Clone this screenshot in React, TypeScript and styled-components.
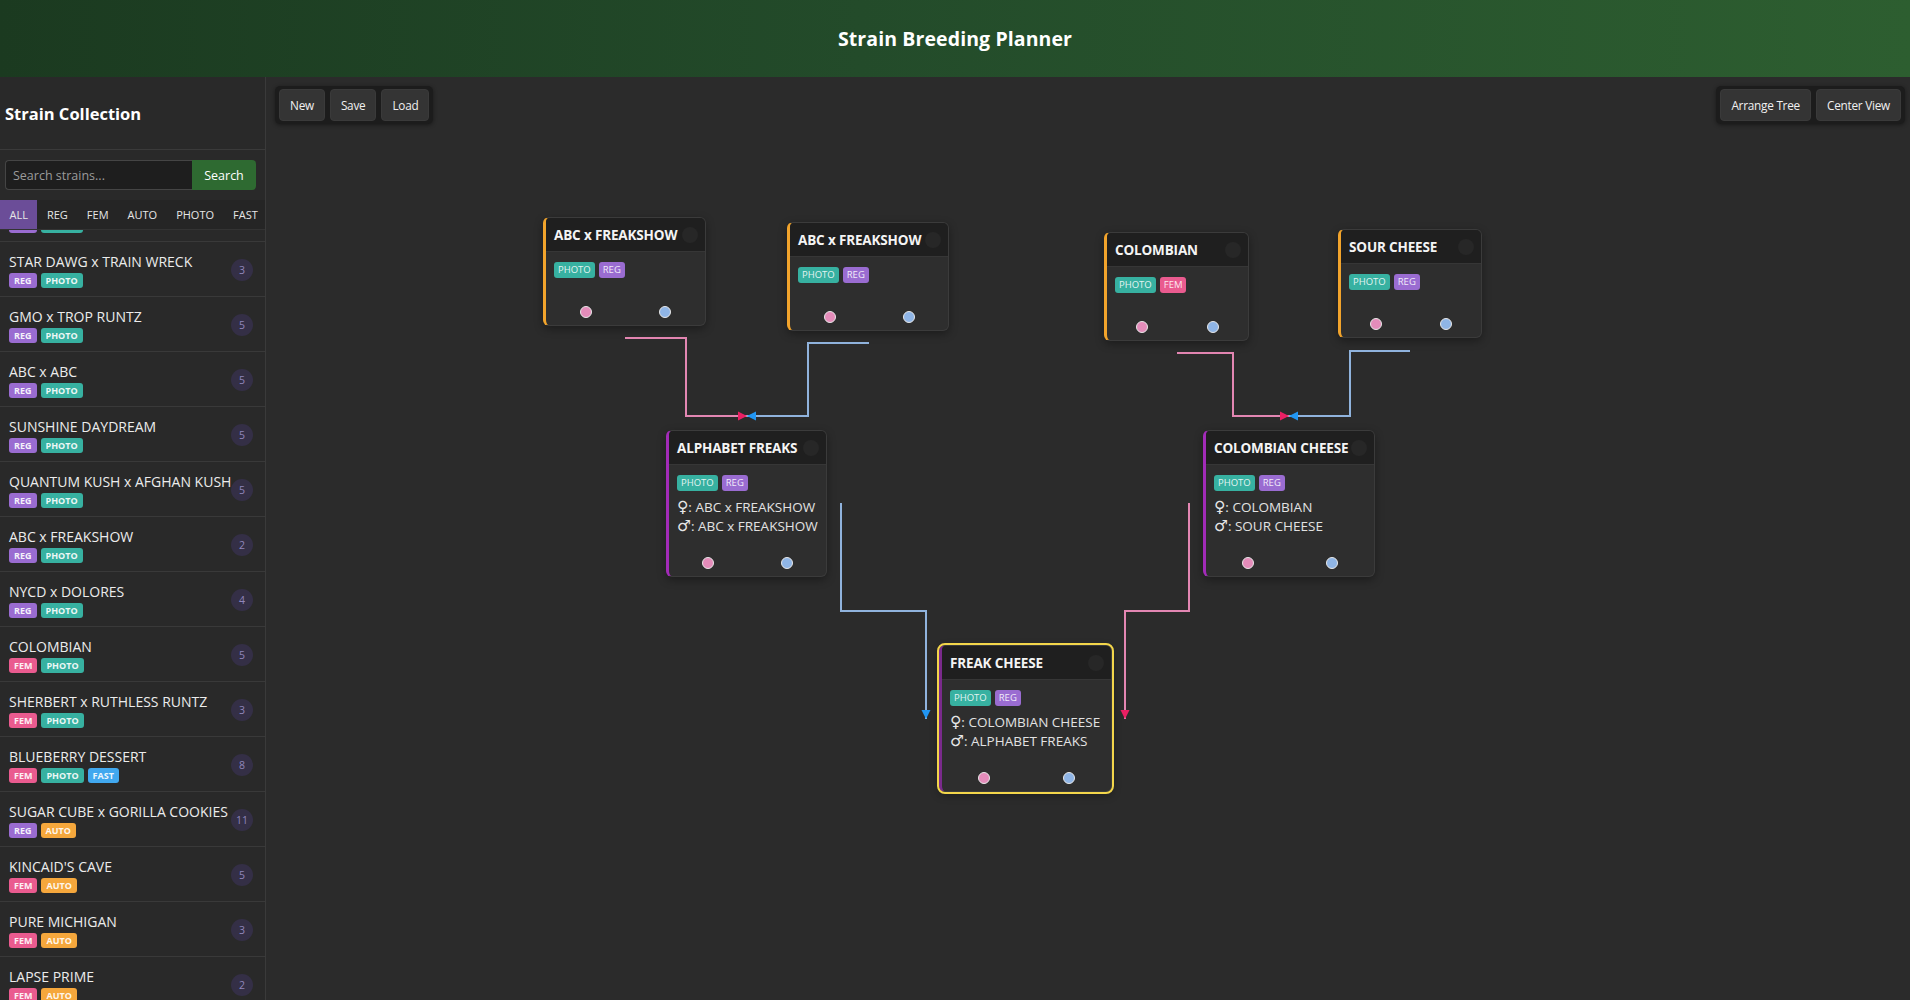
import React, { useLayoutEffect, useRef } from "react";
import styled, { createGlobalStyle } from "styled-components";

const GlobalStyle = createGlobalStyle`
  html, body { margin: 0; padding: 0; height: 100%; background: #2b2b2b; }
  body {
    font-family: "Open Sans", "Noto Sans", "Liberation Sans", Arial, sans-serif;
    color: #e8e8e8;
    overflow: hidden;
  }
  #root { height: 100%; }
  * { box-sizing: border-box; }
`;

type Tag = "REG" | "FEM" | "AUTO" | "PHOTO" | "FAST";

const tagColors: Record<Tag, string> = {
  REG: "#9a6cd1",
  FEM: "#ea5b8f",
  AUTO: "#f5a73c",
  PHOTO: "#37b1a1",
  FAST: "#41a8ef",
};

interface Strain {
  name: string;
  tags: Tag[];
  count: number;
}

const strains: Strain[] = [
  { name: "WEDDING CAKE x RUNTZ", tags: ["REG", "PHOTO"], count: 4 },
  { name: "STAR DAWG x TRAIN WRECK", tags: ["REG", "PHOTO"], count: 3 },
  { name: "GMO x TROP RUNTZ", tags: ["REG", "PHOTO"], count: 5 },
  { name: "ABC x ABC", tags: ["REG", "PHOTO"], count: 5 },
  { name: "SUNSHINE DAYDREAM", tags: ["REG", "PHOTO"], count: 5 },
  { name: "QUANTUM KUSH x AFGHAN KUSH", tags: ["REG", "PHOTO"], count: 5 },
  { name: "ABC x FREAKSHOW", tags: ["REG", "PHOTO"], count: 2 },
  { name: "NYCD x DOLORES", tags: ["REG", "PHOTO"], count: 4 },
  { name: "COLOMBIAN", tags: ["FEM", "PHOTO"], count: 5 },
  { name: "SHERBERT x RUTHLESS RUNTZ", tags: ["FEM", "PHOTO"], count: 3 },
  { name: "BLUEBERRY DESSERT", tags: ["FEM", "PHOTO", "FAST"], count: 8 },
  { name: "SUGAR CUBE x GORILLA COOKIES", tags: ["REG", "AUTO"], count: 11 },
  { name: "KINCAID'S CAVE", tags: ["FEM", "AUTO"], count: 5 },
  { name: "PURE MICHIGAN", tags: ["FEM", "AUTO"], count: 3 },
  { name: "LAPSE PRIME", tags: ["FEM", "AUTO"], count: 2 },
];

interface TreeNode {
  id: string;
  title: string;
  tags: Tag[];
  x: number;
  y: number;
  w: number;
  accent: string;
  mother?: string;
  father?: string;
  selected?: boolean;
}

const ORANGE = "#f2a42c";
const MAGENTA = "#a22bb8";

const nodes: TreeNode[] = [
  { id: "n1", title: "ABC x FREAKSHOW", tags: ["PHOTO", "REG"], x: 277, y: 140, w: 163, accent: ORANGE },
  { id: "n2", title: "ABC x FREAKSHOW", tags: ["PHOTO", "REG"], x: 521, y: 145, w: 162, accent: ORANGE },
  { id: "n3", title: "COLOMBIAN", tags: ["PHOTO", "FEM"], x: 838, y: 155, w: 145, accent: ORANGE },
  { id: "n4", title: "SOUR CHEESE", tags: ["PHOTO", "REG"], x: 1072, y: 152, w: 144, accent: ORANGE },
  {
    id: "n5", title: "ALPHABET FREAKS", tags: ["PHOTO", "REG"], x: 400, y: 353, w: 161, accent: MAGENTA,
    mother: "ABC x FREAKSHOW", father: "ABC x FREAKSHOW",
  },
  {
    id: "n6", title: "COLOMBIAN CHEESE", tags: ["PHOTO", "REG"], x: 937, y: 353, w: 172, accent: MAGENTA,
    mother: "COLOMBIAN", father: "SOUR CHEESE",
  },
  {
    id: "n7", title: "FREAK CHEESE", tags: ["PHOTO", "REG"], x: 673, y: 568, w: 173, accent: "#7a2a8c",
    mother: "COLOMBIAN CHEESE", father: "ALPHABET FREAKS", selected: true,
  },
];

interface Edge {
  d: string;
  kind: "mother" | "father";
}

const edges: Edge[] = [
  { d: "M 359 261 H 420 V 339 H 481", kind: "mother" },
  { d: "M 603 266 H 542 V 339 H 481", kind: "father" },
  { d: "M 911 276 H 967 V 339 H 1023", kind: "mother" },
  { d: "M 1144 274 H 1084 V 339 H 1023", kind: "father" },
  { d: "M 575 426 V 534 H 660 V 642", kind: "father" },
  { d: "M 923 426 V 534 H 859 V 642", kind: "mother" },
];

/* ---------- layout ---------- */

const Page = styled.div`
  display: flex;
  flex-direction: column;
  height: 100vh;
`;

const TopBar = styled.header`
  height: 77px;
  flex-shrink: 0;
  display: flex;
  align-items: center;
  justify-content: center;
  background: linear-gradient(90deg, #1b3a20 0%, #234b2a 45%, #2d5e30 100%);
`;

const Title = styled.h1`
  margin: 0;
  font-size: 19.5px;
  font-weight: 700;
  color: #ffffff;
  letter-spacing: 0.1px;
`;

const Main = styled.div`
  flex: 1;
  display: flex;
  min-height: 0;
`;

/* ---------- sidebar ---------- */

const Sidebar = styled.aside`
  width: 266px;
  flex-shrink: 0;
  display: flex;
  flex-direction: column;
  background: #292929;
  border-right: 1px solid #3a3a3a;
`;

const SidebarHeader = styled.div`
  height: 73px;
  display: flex;
  align-items: center;
  padding: 0 5px;
  border-bottom: 1px solid #3a3a3a;
`;

const SidebarTitle = styled.h2`
  margin: 0;
  font-size: 16.5px;
  font-weight: 700;
  color: #ffffff;
`;

const SearchRow = styled.div`
  display: flex;
  padding: 10px 9px 10px 5px;
`;

const SearchInput = styled.input`
  flex: 1;
  min-width: 0;
  height: 30px;
  background: #1e1e1e;
  border: 1px solid #454545;
  border-right: none;
  border-radius: 4px 0 0 4px;
  color: #ddd;
  font-family: inherit;
  font-size: 12.5px;
  padding: 0 7px;
  outline: none;
  &::placeholder { color: #9b9b9b; }
`;

const SearchButton = styled.button`
  width: 64px;
  height: 30px;
  border: none;
  border-radius: 0 4px 4px 0;
  background: #2e6a31;
  color: #fff;
  font-family: inherit;
  font-size: 12.5px;
`;

const FilterTabs = styled.div`
  display: flex;
  height: 30px;
  background: #252525;
  border-bottom: 1px solid #333;
  overflow: hidden;
`;

const FilterTab = styled.div<{ $active?: boolean }>`
  flex-shrink: 0;
  padding: 0 9.5px;
  line-height: 30px;
  font-size: 11px;
  color: #e6e6e6;
  background: ${(p) => (p.$active ? "#6b4d98" : "transparent")};
`;

const StrainList = styled.div`
  flex: 1;
  overflow-y: auto;
  scrollbar-width: none;
  &::-webkit-scrollbar { display: none; }
`;

const StrainItem = styled.div`
  display: flex;
  align-items: center;
  justify-content: space-between;
  padding: 10px 12px 8px 9px;
  border-bottom: 1px solid #393939;
`;

const StrainInfo = styled.div`
  flex: 1;
  min-width: 0;
`;

const StrainName = styled.div`
  font-size: 14px;
  line-height: 20px;
  color: #ececec;
  white-space: nowrap;
`;

const TagRow = styled.div<{ $gap: number }>`
  display: flex;
  gap: ${(p) => p.$gap}px;
`;

const SideTags = styled(TagRow)`
  margin-top: 1px;
`;

const SideBadge = styled.span<{ $tag: Tag }>`
  height: 15px;
  line-height: 15px;
  padding: 0 5px;
  font-size: 9px;
  font-weight: 700;
  border-radius: 3px;
  color: rgba(255, 255, 255, 0.92);
  background: ${(p) => tagColors[p.$tag]};
`;

const CountBubble = styled.div`
  width: 22px;
  height: 22px;
  flex-shrink: 0;
  border-radius: 50%;
  background: #342f46;
  color: #9086bb;
  font-size: 10.5px;
  display: grid;
  place-items: center;
`;

/* ---------- canvas ---------- */

const Canvas = styled.section`
  flex: 1;
  position: relative;
  background: #2b2b2b;
  overflow: hidden;
`;

const Toolbar = styled.div`
  position: relative;
  z-index: 3;
  display: flex;
  justify-content: space-between;
  padding: 9px 5px 0 9px;
`;

const ToolGroup = styled.div`
  display: flex;
  gap: 5px;
  padding: 3px 4px;
  background: #1c1c1c;
  border-radius: 5px;
  box-shadow: 0 1px 4px rgba(0, 0, 0, 0.45);
`;

const ToolButton = styled.button`
  height: 32px;
  padding: 0 10px;
  border: 1px solid #3a3a3a;
  border-radius: 4px;
  background: #343434;
  color: #f0f0f0;
  font-family: inherit;
  font-size: 11.8px;
  letter-spacing: -0.25px;
`;

const EdgeLayer = styled.svg`
  position: absolute;
  inset: 0;
  width: 100%;
  height: 100%;
  pointer-events: none;
  z-index: 0;
`;

const NodeCard = styled.div<{ $accent: string; $selected?: boolean }>`
  position: absolute;
  z-index: 1;
  background: #2e2e2e;
  border: 1px solid #3b3b3b;
  border-left: 3px solid ${(p) => p.$accent};
  border-radius: 6px;
  box-shadow: 0 3px 8px rgba(0, 0, 0, 0.35);
  outline: ${(p) => (p.$selected ? "2px solid #f3d64b" : "none")};
`;

const NodeHeader = styled.div`
  position: relative;
  height: 34px;
  display: flex;
  align-items: center;
  padding: 0 6px 0 8px;
  background: #1f1f1f;
  border-bottom: 1px solid #363636;
  border-radius: 4px 5px 0 0;
`;

const NodeTitle = styled.div`
  position: relative;
  z-index: 1;
  font-size: 13.5px;
  font-weight: 700;
  letter-spacing: -0.15px;
  color: #f4f4f4;
  white-space: nowrap;
`;

const CloseDot = styled.span`
  position: absolute;
  right: 7px;
  top: 9px;
  width: 16px;
  height: 16px;
  border-radius: 50%;
  background: #272727;
`;

const NodeContent = styled.div`
  padding: 10px 10px 0 8px;
`;

const NodeBadge = styled.span<{ $tag: Tag }>`
  height: 16px;
  line-height: 16px;
  padding: 0 4px;
  font-size: 9.5px;
  border-radius: 3px;
  color: rgba(255, 255, 255, 0.88);
  background: ${(p) => tagColors[p.$tag]};
`;

const ParentInfo = styled.div`
  padding-top: 7px;
`;

const ParentLine = styled.div`
  font-size: 13.5px;
  line-height: 19px;
  height: 19px;
  color: #e2e2e2;
  white-space: nowrap;
`;

const SexSymbol = styled.span`
  font-family: "DejaVu Sans", sans-serif;
  font-size: 15.5px;
  line-height: 1;
  color: #e6e6e6;
`;

const Ports = styled.div`
  display: flex;
  justify-content: space-around;
  padding: 21px 0 7px;
`;

const Port = styled.span<{ $color: string }>`
  width: 12px;
  height: 12px;
  border-radius: 50%;
  background: ${(p) => p.$color};
  border: 1.5px solid #e8e8e8;
`;

const edgeStyle = {
  mother: { line: "#e386b2", arrow: "#ea1f63" },
  father: { line: "#90b3dd", arrow: "#2196f3" },
};

function NodeView({ node }: { node: TreeNode }) {
  return (
    <NodeCard
      $accent={node.accent}
      $selected={node.selected}
      style={{ left: node.x, top: node.y, width: node.w }}
    >
      <NodeHeader>
        <NodeTitle>{node.title}</NodeTitle>
        <CloseDot />
      </NodeHeader>
      <NodeContent>
        <TagRow $gap={4}>
          {node.tags.map((t) => (
            <NodeBadge key={t} $tag={t}>
              {t}
            </NodeBadge>
          ))}
        </TagRow>
        <ParentInfo>
          {node.mother && (
            <ParentLine>
              <SexSymbol>♀</SexSymbol>: {node.mother}
            </ParentLine>
          )}
          {node.father && (
            <ParentLine>
              <SexSymbol>♂</SexSymbol>: {node.father}
            </ParentLine>
          )}
        </ParentInfo>
      </NodeContent>
      <Ports>
        <Port $color="#e48cba" />
        <Port $color="#8fb5e6" />
      </Ports>
    </NodeCard>
  );
}

export default function App() {
  const listRef = useRef<HTMLDivElement>(null);

  useLayoutEffect(() => {
    if (listRef.current) listRef.current.scrollTop = 43;
  }, []);

  return (
    <Page>
      <GlobalStyle />
      <TopBar>
        <Title>Strain Breeding Planner</Title>
      </TopBar>
      <Main>
        <Sidebar>
          <SidebarHeader>
            <SidebarTitle>Strain Collection</SidebarTitle>
          </SidebarHeader>
          <SearchRow>
            <SearchInput placeholder="Search strains..." />
            <SearchButton>Search</SearchButton>
          </SearchRow>
          <FilterTabs>
            {["ALL", "REG", "FEM", "AUTO", "PHOTO", "FAST"].map((f) => (
              <FilterTab key={f} $active={f === "ALL"}>
                {f}
              </FilterTab>
            ))}
          </FilterTabs>
          <StrainList ref={listRef}>
            {strains.map((s) => (
              <StrainItem key={s.name}>
                <StrainInfo>
                  <StrainName>{s.name}</StrainName>
                  <SideTags $gap={4}>
                    {s.tags.map((t) => (
                      <SideBadge key={t} $tag={t}>
                        {t}
                      </SideBadge>
                    ))}
                  </SideTags>
                </StrainInfo>
                <CountBubble>{s.count}</CountBubble>
              </StrainItem>
            ))}
          </StrainList>
        </Sidebar>
        <Canvas>
          <Toolbar>
            <ToolGroup>
              <ToolButton>New</ToolButton>
              <ToolButton>Save</ToolButton>
              <ToolButton>Load</ToolButton>
            </ToolGroup>
            <ToolGroup>
              <ToolButton>Arrange Tree</ToolButton>
              <ToolButton>Center View</ToolButton>
            </ToolGroup>
          </Toolbar>
          <EdgeLayer>
            <defs>
              {(["mother", "father"] as const).map((k) => (
                <marker
                  key={k}
                  id={`arrow-${k}`}
                  viewBox="0 0 10 10"
                  refX="10"
                  refY="5"
                  markerWidth="9"
                  markerHeight="10"
                  markerUnits="userSpaceOnUse"
                  orient="auto"
                >
                  <path d="M0,0 L10,5 L0,10 z" fill={edgeStyle[k].arrow} />
                </marker>
              ))}
            </defs>
            {edges.map((e, i) => (
              <path
                key={i}
                d={e.d}
                fill="none"
                stroke={edgeStyle[e.kind].line}
                strokeWidth={2}
                markerEnd={`url(#arrow-${e.kind})`}
              />
            ))}
          </EdgeLayer>
          {nodes.map((n) => (
            <NodeView key={n.id} node={n} />
          ))}
        </Canvas>
      </Main>
    </Page>
  );
}
